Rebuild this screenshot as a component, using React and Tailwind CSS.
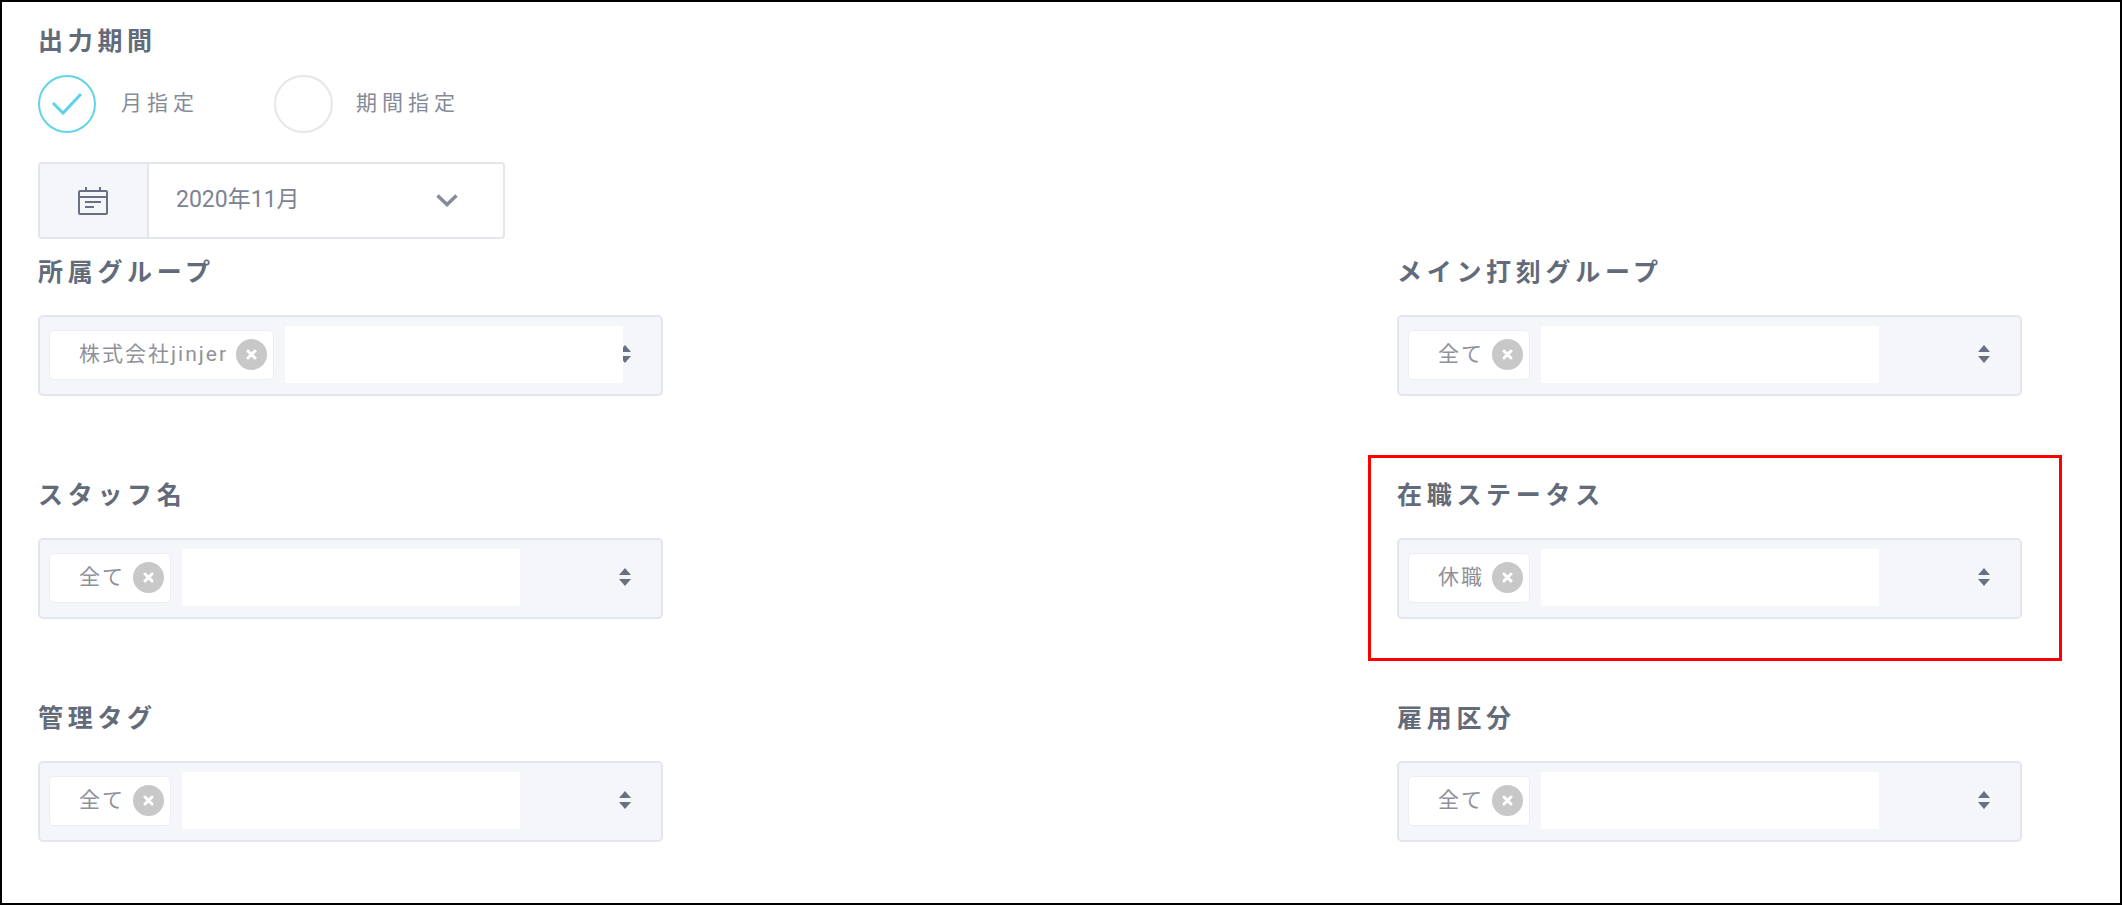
const FONT = "font-['Roboto','Noto_Sans_CJK_JP',sans-serif]";

function Label({ children }) {
    return (
        <div className="h-[44px] flex items-center text-[25px] font-bold tracking-[4.7px] text-[#636b7a] leading-none">
            {children}
        </div>
    );
}

function Arrows() {
    return (
        <svg className="absolute left-[579px] top-[28px]" width="12" height="18" viewBox="0 0 12 18" fill="#687082">
            <path d="M6 0L12 7H0Z" />
            <path d="M0 11H12L6 18Z" />
        </svg>
    );
}

function Chip({ text }) {
    return (
        <div className="flex items-center h-[50px] pl-[29px] pr-[6px] bg-white border border-[#eceef3] rounded-[5px] shrink-0">
            <span className="text-[21px] tracking-[2px] text-[#8f929a] whitespace-nowrap leading-none">{text}</span>
            <span className="ml-[8px] w-[31px] h-[31px] rounded-full bg-[#c8c8c8] flex items-center justify-center">
                <svg width="13" height="13" viewBox="0 0 13 13" stroke="#fff" strokeWidth="3" strokeLinecap="round">
                    <path d="M3 3L10 10M10 3L3 10" />
                </svg>
            </span>
        </div>
    );
}

function Field({ label, chip, boxed }) {
    return (
        <div className="relative h-[223px]">
            {boxed && <div className="absolute left-[-29px] top-[-18px] w-[694px] h-[206px] border-[3px] border-[#ff0000] pointer-events-none"></div>}
            <Label>{label}</Label>
            <div className="relative mt-[21px] w-[625px] h-[81px] bg-[#f5f6fa] border-2 border-[#e3e6ef] rounded-[5px] flex items-center pl-[9px] pb-[2px]">
                <Arrows />
                <Chip text={chip} />
                <div className="relative ml-[11px] w-[338px] h-[57px] bg-white"></div>
            </div>
        </div>
    );
}

export default function App() {
    return (
        <div className={`w-[2122px] h-[905px] border-2 border-black bg-white overflow-hidden pl-[36px] pt-[17px] ${FONT}`}>
            <Label>出力期間</Label>
            <div className="flex items-center mt-[12px] h-[58px]">
                <div className="w-[58px] h-[58px] rounded-full border-2 border-[#62d4e6] flex items-center justify-center">
                    <svg width="32" height="26" viewBox="0 0 32 26" fill="none" stroke="#5fd3e6" strokeWidth="3">
                        <path d="M2 12L12 22L30 3" />
                    </svg>
                </div>
                <span className="ml-[25px] w-[153px] text-[21px] tracking-[5px] text-[#858b98]">月指定</span>
                <div className="w-[59px] h-[58px] rounded-full border-2 border-[#e5e7ec]"></div>
                <span className="ml-[23px] text-[21px] tracking-[5px] text-[#858b98]">期間指定</span>
            </div>
            <div className="mt-[29px] w-[467px] h-[77px] border-2 border-[#e3e6ec] rounded-[4px] flex items-stretch">
                <div className="w-[109px] bg-[#f5f6fa] border-r-2 border-[#e3e6ec] flex items-center justify-center pr-[2px]">
                    <svg width="30" height="28" viewBox="0 0 30 28" fill="none" stroke="#687082" strokeWidth="2">
                        <rect x="1" y="4" width="28" height="23" rx="1" />
                        <path d="M1 10H29M8 0V5M22 0V5M7 15H23M7 20H16" />
                    </svg>
                </div>
                <div className="flex-1 flex items-center justify-between pl-[27px] pr-[45px]">
                    <span className="text-[23px] text-[#7d8391]">2020年11月</span>
                    <svg width="22" height="13" viewBox="0 0 22 13" fill="none" stroke="#858b9a" strokeWidth="3.5">
                        <path d="M1.5 1.5L11 10.5L20.5 1.5" />
                    </svg>
                </div>
            </div>
            <div className="mt-[11px] grid grid-cols-[1359px_627px]">
                <Field label="所属グループ" chip="株式会社jinjer" />
                <Field label="メイン打刻グループ" chip="全て" />
                <Field label="スタッフ名" chip="全て" />
                <Field label="在職ステータス" chip="休職" boxed />
                <Field label="管理タグ" chip="全て" />
                <Field label="雇用区分" chip="全て" />
            </div>
        </div>
    );
}
